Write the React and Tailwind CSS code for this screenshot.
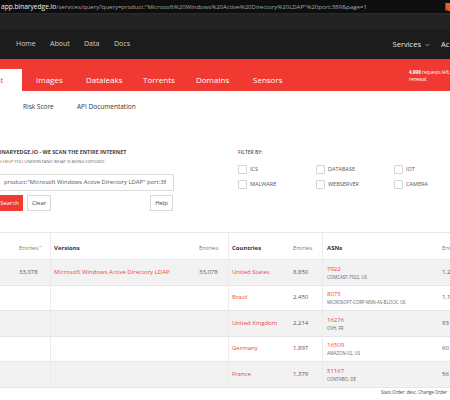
import React from "react";

const RED = "text-[#ef453e]";

const rows = [
  { country: "United States", ce: "8,850", asn: "7922", asnName: "COMCAST-7922, US", ae: "1,2", gray: true, first: true },
  { country: "Brazil", ce: "2,450", asn: "8075", asnName: "MICROSOFT-CORP-MSN-AS-BLOCK, US", ae: "1,1", gray: false },
  { country: "United Kingdom", ce: "2,214", asn: "16276", asnName: "OVH, FR", ae: "93", gray: true },
  { country: "Germany", ce: "1,897", asn: "16509", asnName: "AMAZON-02, US", ae: "60", gray: false },
  { country: "France", ce: "1,379", asn: "51167", asnName: "CONTABO, DE", ae: "56", gray: true },
];

function Checkbox({ label }) {
  return (
    <div className="flex items-center w-[78px] h-[9px] shrink-0">
      <div className="w-[9px] h-[9px] border border-[#d4d4d4] rounded-[1px] bg-white shrink-0" />
      <span className="ml-[3px] text-[5.5px] leading-[9px] text-[#555]">{label}</span>
    </div>
  );
}

export default function App() {
  return (
    <div className="w-[450px] h-[400px] overflow-hidden bg-white font-['Open_Sans',sans-serif]">
      {/* URL bar */}
      <div className="h-[14px] bg-[#0e0e0e] border-b border-[#2a2a2a] flex items-center whitespace-nowrap overflow-hidden relative">
        <span className="shrink-0 pl-[1px] text-[6.6px] leading-[14px] text-[#f2f2f2]">app.binaryedge.io</span>
        <span className="shrink-0 text-[6px] leading-[14px] text-[#a8a8a8]">/services/query?query=product:"Microsoft%20Windows%20Active%20Directory%20LDAP"%20port:389&amp;page=1</span>
        <div className="absolute right-[4px] top-[3px] w-[1px] h-[8px] bg-[#555]" />
        <div className="absolute right-[-2px] top-[3px] w-[6px] h-[8px] bg-[#f05a24] rounded-b-[3px]" />
      </div>
      {/* grey band */}
      <div className="h-[16px] bg-[#232323]" />
      {/* navbar */}
      <div className="h-[29px] bg-[#1c1c1c] flex items-center whitespace-nowrap text-[7px] text-[#d0d0d0] overflow-hidden">
        <div className="flex pl-[16px] shrink-0">
          <span className="w-[34px] shrink-0">Home</span>
          <span className="w-[34px] shrink-0">About</span>
          <span className="w-[30px] shrink-0">Data</span>
          <span className="w-[30px] shrink-0">Docs</span>
        </div>
        <div className="ml-auto flex items-center shrink-0">
          <span className="text-[7.5px] text-[#e6e6e6]">Services</span>
          <svg className="ml-[4px]" width="5" height="4" viewBox="0 0 5 4"><path d="M0.5 1 L2.5 3 L4.5 1" stroke="#bbb" strokeWidth="0.7" fill="none" /></svg>
          <span className="ml-[11px] w-[9px] overflow-hidden text-[7.5px] text-[#e6e6e6]">Ac</span>
        </div>
      </div>
      {/* red tab bar */}
      <div className="h-[32px] bg-[#ef3931] flex items-end whitespace-nowrap overflow-hidden">
        <div className="w-[22px] h-[22px] shrink-0 bg-white overflow-hidden flex items-center">
          <span className={`shrink-0 -ml-[14px] text-[8px] ${RED}`}>Host</span>
        </div>
        <div className="flex h-[22px] items-center text-[8px] text-white pl-[14px] shrink-0">
          <span className="w-[50px] shrink-0">Images</span>
          <span className="w-[57px] shrink-0">Dataleaks</span>
          <span className="w-[53px] shrink-0">Torrents</span>
          <span className="w-[57px] shrink-0">Domains</span>
          <span className="w-[60px] shrink-0">Sensors</span>
        </div>
        <div className="ml-[96px] shrink-0 h-[32px] flex flex-col justify-center pt-[1px] text-[4.6px] leading-[7px] text-white">
          <div><span className="font-bold">4,996</span> requests left, 30 days until</div>
          <div>renewal.</div>
        </div>
      </div>
      {/* sub nav */}
      <div className="h-[32px] flex items-center text-[6.5px] text-[#333] whitespace-nowrap">
        <span className="ml-[23px] w-[54px] shrink-0">Risk Score</span>
        <span className="shrink-0">API Documentation</span>
      </div>
      {/* search section */}
      <div className="h-[109px] flex whitespace-nowrap">
        <div className="-ml-[4px] w-[178px] shrink-0 pt-[26px] flex flex-col">
          <div className="text-[5.4px] leading-[7px] font-bold text-[#444]">BINARYEDGE.IO - WE SCAN THE ENTIRE INTERNET</div>
          <div className="mt-[2px] text-[4.3px] leading-[6px] text-[#666]">TO HELP YOU UNDERSTAND WHAT IS BEING EXPOSED</div>
          <div className="mt-[10px] h-[17px] border border-[#dcdcdc] bg-white flex items-center overflow-hidden pl-[7px] pr-[7px]">
            <span className="text-[5.9px] text-[#555] overflow-hidden">product:"Microsoft Windows Active Directory LDAP" port:389</span>
          </div>
          <div className="mt-[4px] flex h-[16px]">
            <div className="w-[27px] h-[16px] bg-[#ef3931] text-white text-[5.9px] flex items-center justify-center">Search</div>
            <div className="ml-[4px] w-[24px] h-[16px] border border-[#d8d8d8] text-[#444] text-[5.9px] flex items-center justify-center">Clear</div>
            <div className="ml-auto mr-[1px] w-[23px] h-[16px] border border-[#d8d8d8] text-[#444] text-[5.9px] flex items-center justify-center">Help</div>
          </div>
        </div>
        <div className="ml-[64px] shrink-0 pt-[26px] flex flex-col">
          <div className="text-[5px] leading-[7px] font-semibold text-[#555]">FILTER BY:</div>
          <div className="mt-[9px] flex">
            <Checkbox label="ICS" />
            <Checkbox label="DATABASE" />
            <Checkbox label="IOT" />
          </div>
          <div className="mt-[6px] flex">
            <Checkbox label="MALWARE" />
            <Checkbox label="WEBSERVER" />
            <Checkbox label="CAMERA" />
          </div>
        </div>
      </div>
      {/* table */}
      <div className="border-t border-[#e8e8e8] whitespace-nowrap">
        <div className="-ml-[20px] w-[480px]">
          {/* header */}
          <div className="flex h-[27px] border-b border-[#e8e8e8] text-[6px] items-end">
            <div className="w-[37px] shrink-0 h-full" />
            <div className="w-[33px] shrink-0 h-full pl-[2px] pb-[6px] flex items-end text-[#777]">
              Entries
              <svg className="ml-[1px] mb-[5px]" width="3" height="3" viewBox="0 0 3 3"><path d="M0.3 2.2 L1.5 0.8 L2.7 2.2" stroke="#888" strokeWidth="0.5" fill="none" /></svg>
            </div>
            <div className="w-[146px] shrink-0 h-full border-l border-[#ececec] pl-[3px] pb-[6px] flex items-end font-bold text-[#333]">Versions</div>
            <div className="w-[32px] shrink-0 h-full pl-[3px] pb-[6px] flex items-end text-[#777]">Entries</div>
            <div className="w-[62px] shrink-0 h-full border-l border-[#ececec] pl-[3px] pb-[6px] flex items-end font-bold text-[#333]">Countries</div>
            <div className="w-[32px] shrink-0 h-full pl-[3px] pb-[6px] flex items-end text-[#777]">Entries</div>
            <div className="w-[117px] shrink-0 h-full border-l border-[#ececec] pl-[4px] pb-[6px] flex items-end font-bold text-[#333]">ASNs</div>
            <div className="w-[40px] shrink-0 h-full pl-[3px] pb-[6px] flex items-end text-[#777]">Entries</div>
          </div>
          {rows.map((r, i) => (
            <div
              key={i}
              className={`flex h-[25.5px] border-b border-[#e6e6e6] text-[6px] ${r.gray ? "bg-[#f2f2f2]" : "bg-white"}`}
            >
              <div className={`w-[37px] shrink-0 pl-[6px] flex items-center ${RED}`}>{r.first ? "ldap" : ""}</div>
              <div className="w-[33px] shrink-0 pl-[2px] flex items-center text-[#555]">{r.first ? "33,078" : ""}</div>
              <div className={`w-[146px] shrink-0 border-l border-[#ececec] pl-[3px] flex items-center ${RED}`}>
                {r.first ? "Microsoft Windows Active Directory LDAP" : ""}
              </div>
              <div className="w-[32px] shrink-0 pl-[3px] flex items-center text-[#555]">{r.first ? "33,078" : ""}</div>
              <div className={`w-[62px] shrink-0 border-l border-[#ececec] pl-[3px] flex items-center ${RED}`}>{r.country}</div>
              <div className="w-[32px] shrink-0 pl-[3px] flex items-center text-[#555]">{r.ce}</div>
              <div className="w-[117px] shrink-0 border-l border-[#ececec] pl-[4px] flex flex-col justify-center">
                <span className={`text-[6px] leading-[8px] ${RED}`}>{r.asn}</span>
                <span className="mt-[1px] text-[4.4px] leading-[6px] text-[#666]">{r.asnName}</span>
              </div>
              <div className="w-[40px] shrink-0 pl-[3px] flex items-center text-[#555]">{r.ae}</div>
            </div>
          ))}
        </div>
        <div className="pl-[381px] pt-[1px] text-[4.4px] leading-[6px] text-[#444]">Stats Order: desc. Change Order</div>
      </div>
    </div>
  );
}
